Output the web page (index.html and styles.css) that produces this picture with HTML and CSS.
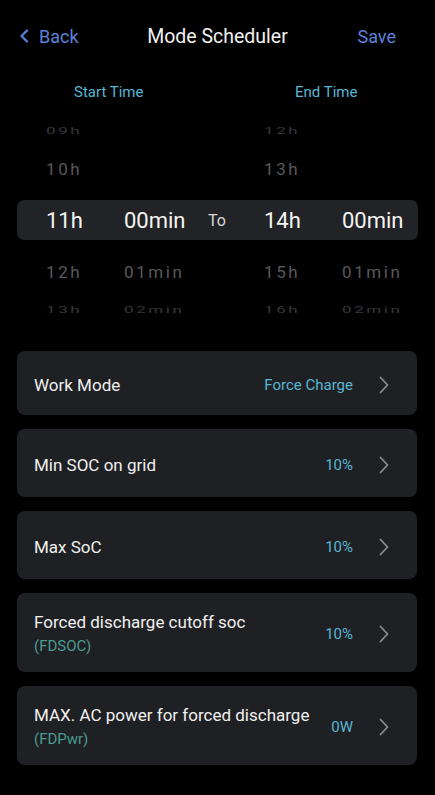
FILE: index.html
```html
<!DOCTYPE html>
<html lang="en">
<head>
    <meta charset="utf-8">
    <meta name="viewport" content="width=device-width, initial-scale=1.0">
    <title>Mode Scheduler</title>
    <link rel="stylesheet" href="styles.css">
</head>
<body>
<div class="main">
    <div class="nav">
        <a class="nav-back">
            <svg width="10" height="14" viewBox="0 0 10 14"><path d="M8 1.5L2.5 7L8 12.5" fill="none" stroke="#5b82db" stroke-width="2.2" stroke-linecap="round" stroke-linejoin="round"/></svg>
            Back
        </a>
        <div class="nav-title">Mode Scheduler</div>
        <a class="nav-save">Save</a>
    </div>

    <div class="labels">
        <span>Start Time</span>
        <span>End Time</span>
    </div>

    <div class="picker">
        <div class="row far">
            <span>09h</span><span></span><span></span><span>12h</span><span></span>
        </div>
        <div class="row near">
            <span>10h</span><span></span><span></span><span>13h</span><span></span>
        </div>
        <div class="row current">
            <span>11h</span><span>00min</span><span class="to">To</span><span>14h</span><span>00min</span>
        </div>
        <div class="row near">
            <span>12h</span><span>01min</span><span></span><span>15h</span><span>01min</span>
        </div>
        <div class="row far">
            <span>13h</span><span>02min</span><span></span><span>16h</span><span>02min</span>
        </div>
    </div>

    <div class="list">
        <div class="item item-short">
            <div class="item-label">Work Mode</div>
            <div class="item-value">Force Charge</div>
            <svg class="arrow" width="12" height="18" viewBox="0 0 12 18"><path d="M2.5 1.5L9.5 9L2.5 16.5" fill="none" stroke="#8b8c8f" stroke-width="1.8" stroke-linecap="round" stroke-linejoin="round"/></svg>
        </div>
        <div class="item">
            <div class="item-label">Min SOC on grid</div>
            <div class="item-value">10%</div>
            <svg class="arrow" width="12" height="18" viewBox="0 0 12 18"><path d="M2.5 1.5L9.5 9L2.5 16.5" fill="none" stroke="#8b8c8f" stroke-width="1.8" stroke-linecap="round" stroke-linejoin="round"/></svg>
        </div>
        <div class="item">
            <div class="item-label">Max SoC</div>
            <div class="item-value">10%</div>
            <svg class="arrow" width="12" height="18" viewBox="0 0 12 18"><path d="M2.5 1.5L9.5 9L2.5 16.5" fill="none" stroke="#8b8c8f" stroke-width="1.8" stroke-linecap="round" stroke-linejoin="round"/></svg>
        </div>
        <div class="item item-tall">
            <div class="item-label">
                Forced discharge cutoff soc
                <div class="item-sub">(FDSOC)</div>
            </div>
            <div class="item-value">10%</div>
            <svg class="arrow" width="12" height="18" viewBox="0 0 12 18"><path d="M2.5 1.5L9.5 9L2.5 16.5" fill="none" stroke="#8b8c8f" stroke-width="1.8" stroke-linecap="round" stroke-linejoin="round"/></svg>
        </div>
        <div class="item item-tall">
            <div class="item-label">
                MAX. AC power for forced discharge
                <div class="item-sub">(FDPwr)</div>
            </div>
            <div class="item-value">0W</div>
            <svg class="arrow" width="12" height="18" viewBox="0 0 12 18"><path d="M2.5 1.5L9.5 9L2.5 16.5" fill="none" stroke="#8b8c8f" stroke-width="1.8" stroke-linecap="round" stroke-linejoin="round"/></svg>
        </div>
    </div>
</div>
</body>
</html>
```

FILE: styles.css
```css
* {
    margin: 0;
    padding: 0;
    box-sizing: border-box;
}
html,body {
    height: 100%;
    background-color: #000;
}
body {
    font-family: Roboto, "Noto Sans", sans-serif;
    color: #f2f2f2;
}
.main {
    min-height: 100%;
    background-color: #000;
}
.nav {
    display: grid;
    grid-template-columns: 1fr auto 1fr;
    align-items: center;
    height: 72px;
    padding: 0 19px;
}
.nav-back {
    display: flex;
    align-items: center;
    gap: 10px;
    font-size: 18px;
    color: #5b82db;
}
.nav-title {
    font-size: 19.5px;
    color: #f0f0f0;
}
.nav-save {
    justify-self: end;
    margin-right: 20px;
    font-size: 18px;
    color: #5b82db;
}
.labels {
    display: grid;
    grid-template-columns: 1fr 1fr;
    height: 40px;
    align-items: center;
    text-align: center;
    font-size: 15px;
    color: #57b5d2;
}
.picker {
    padding-bottom: 22px;
}
.picker .row {
    display: grid;
    grid-template-columns: 78px 84px 56px 78px 1fr;
    align-items: center;
    height: 38px;
    padding-left: 46px;
    font-size: 17px;
    letter-spacing: 2.6px;
}
.picker .row span {
    display: inline-block;
}
.picker .near {
    color: #58595b;
}
.picker .far {
    color: #37383a;
}
.picker .far span {
    transform: scaleY(0.55);
    transform-origin: left center;
}
.picker .current {
    height: 40px;
    margin: 12px 17px 13px;
    padding-left: 29px;
    background-color: #222326;
    border-radius: 7px;
    font-size: 22px;
    letter-spacing: 0;
    color: #f4f4f4;
}
.picker .current .to {
    font-size: 16px;
    color: #d8d8d8;
}
.list {
    display: flex;
    flex-direction: column;
    gap: 14px;
    padding: 0 18px 0 17px;
}
.item {
    display: flex;
    align-items: center;
    height: 68px;
    padding: 3px 27px 0 17px;
    background-color: #1f2023;
    border-radius: 8px;
}
.item-short {
    height: 64px;
}
.item-tall {
    height: 79px;
}
.item-label {
    flex: 1;
    font-size: 17px;
    line-height: 24px;
    color: #f0f0f0;
}
.item-sub {
    font-size: 15px;
    color: #4a9a8f;
}
.item-value {
    margin-right: 25px;
    font-size: 15px;
    color: #57b5d2;
}
.arrow {
    display: block;
}
```
